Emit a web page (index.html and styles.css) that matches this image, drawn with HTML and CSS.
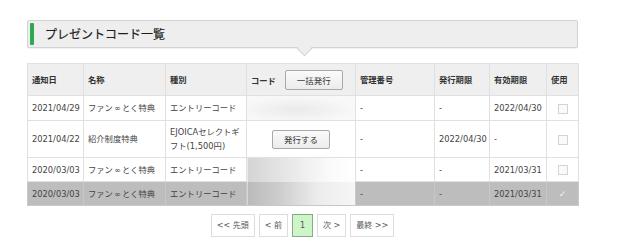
FILE: index.html
```html
<!DOCTYPE html>
<html lang="ja">
<head>
  <meta charset="UTF-8">
  <title>プレゼントコード一覧</title>
  <link rel="stylesheet" href="styles.css">
</head>
<body>

  <div class="wrap">
    <h2 class="title">プレゼントコード一覧</h2>

    <table class="codes">
      <colgroup>
        <col style="width:56px"><col style="width:82px"><col style="width:81px"><col style="width:109px">
        <col style="width:79px"><col style="width:55px"><col style="width:57px"><col style="width:32px">
      </colgroup>
      <tr class="head">
        <th>通知日</th>
        <th>名称</th>
        <th>種別</th>
        <th class="code-head">コード <button class="btn btn-bulk">一括発行</button></th>
        <th>管理番号</th>
        <th>発行期限</th>
        <th>有効期限</th>
        <th>使用</th>
      </tr>
      <tr class="r1">
        <td>2021/04/29</td>
        <td>ファン<span class="inf">∞</span>とく特典</td>
        <td>エントリーコード</td>
        <td class="blur blur-a"></td>
        <td>-</td>
        <td>-</td>
        <td>2022/04/30</td>
        <td class="use"><span class="check"></span></td>
      </tr>
      <tr class="r2">
        <td>2021/04/22</td>
        <td>紹介制度特典</td>
        <td>EJOICAセレクトギ<br>フト(1,500円)</td>
        <td class="center"><button class="btn btn-issue">発行する</button></td>
        <td>-</td>
        <td>2022/04/30</td>
        <td>-</td>
        <td class="use"><span class="check"></span></td>
      </tr>
      <tr class="r3">
        <td>2020/03/03</td>
        <td>ファン<span class="inf">∞</span>とく特典</td>
        <td>エントリーコード</td>
        <td class="blur blur-b"></td>
        <td>-</td>
        <td>-</td>
        <td>2021/03/31</td>
        <td class="use"><span class="check"></span></td>
      </tr>
      <tr class="r4 used">
        <td>2020/03/03</td>
        <td>ファン<span class="inf">∞</span>とく特典</td>
        <td>エントリーコード</td>
        <td class="blur blur-c"></td>
        <td>-</td>
        <td>-</td>
        <td>2021/03/31</td>
        <td class="use"><span class="tick">✓</span></td>
      </tr>
    </table>

    <div class="pager">
      <a href="#">&lt;&lt; 先頭</a>
      <a href="#">&lt; 前</a>
      <a href="#" class="current">1</a>
      <a href="#">次 &gt;</a>
      <a href="#">最終 &gt;&gt;</a>
    </div>
  </div>

</body>
</html>
```

FILE: styles.css
```css
body {
  margin: 0;
  font-family: "DejaVu Sans", "Noto Sans CJK JP", sans-serif;
  background: #fff;
  color: #444;
}

.wrap {
  width: 551px;
  margin-left: 27px;
  padding-top: 20px;
}

/* title bar with little arrow */
.title {
  position: relative;
  margin: 0 0 15px;
  height: 26px;
  line-height: 26px;
  padding-left: 17px;
  background: #eeeeee;
  border: 1px solid #d2d2d2;
  border-radius: 2px;
  box-shadow: 0 1px 1px rgba(0, 0, 0, 0.06);
  font-family: "Noto Sans CJK JP", sans-serif;
  font-size: 12px;
  font-weight: normal;
  color: #1e1e1e;
  -webkit-text-stroke: 0.2px #1e1e1e;
}

.title::before {
  content: "";
  position: absolute;
  left: 2px;
  top: 2px;
  width: 4px;
  height: 22px;
  background: #2fa84f;
  border-radius: 1px;
}

.title::after {
  content: "";
  position: absolute;
  left: 271px;
  bottom: -7px;
  width: 10px;
  height: 10px;
  background: #eeeeee;
  border-right: 1px solid #d2d2d2;
  border-bottom: 1px solid #d2d2d2;
  transform: rotate(45deg);
}

.codes {
  width: 551px;
  table-layout: fixed;
  border-collapse: collapse;
  font-size: 8.3px;
}

.codes th,
.codes td {
  border: 1px solid #e0e0e0;
  padding: 0 4px;
  text-align: left;
  vertical-align: middle;
  line-height: 14px;
  white-space: nowrap;
}

.codes th {
  background: #efefef;
  font-weight: bold;
  color: #333;
}

.inf {
  display: inline-block;
  width: 1.1em;
  text-align: center;
}

.head { height: 32px; }
.r1 { height: 25px; }
.r2 { height: 37px; }
.r3 { height: 24px; }
.r4 { height: 24px; }

.used td {
  background: #bdbdbd;
  border-color: #c8c8c8;
}

.center { text-align: center !important; }

.btn {
  font-family: "Noto Sans CJK JP", sans-serif;
  font-size: 8.5px;
  color: #333;
  background: linear-gradient(#fafafa, #ececec);
  border: 1px solid #a9a9a9;
  border-radius: 2px;
  height: 20px;
  width: 58px;
  padding: 0;
  cursor: pointer;
}

.btn-bulk { margin-left: 6px; }
.btn-issue { height: 19px; }

/* redacted code cells */
.blur-a {
  background: radial-gradient(ellipse at 45% 55%, #ececec 10%, #f8f8f8 70%) !important;
  border-left-color: #f4f4f4 !important;
}

.blur-b {
  background: linear-gradient(to right, #d4d4d4 0%, #e6e6e6 35%, #fafafa 75%, #fff 100%) !important;
  border-bottom: none !important;
}

.blur-c {
  background: linear-gradient(to right, #bababa 0%, #cdcdcd 30%, #ececec 65%, #f6f6f6 100%) !important;
  border-top: none !important;
}

.use {
  text-align: center !important;
}

.check {
  display: inline-block;
  width: 8px;
  height: 8px;
  border: 1px solid #d4d4d4;
  background: #fafafa;
  vertical-align: middle;
}

.tick {
  color: #f2f2f2;
  font-size: 9px;
}

.pager {
  display: flex;
  justify-content: center;
  gap: 4px;
  margin-top: 8px;
}

.pager a {
  display: block;
  height: 21px;
  line-height: 21px;
  padding: 0 5px;
  border: 1px solid #dddddd;
  background: #fff;
  color: #555;
  text-decoration: none;
  font-size: 8px;
}

.pager a.current {
  background: #ccf5c8;
  border-color: #8aa88a;
  padding: 0 7px;
}
```
